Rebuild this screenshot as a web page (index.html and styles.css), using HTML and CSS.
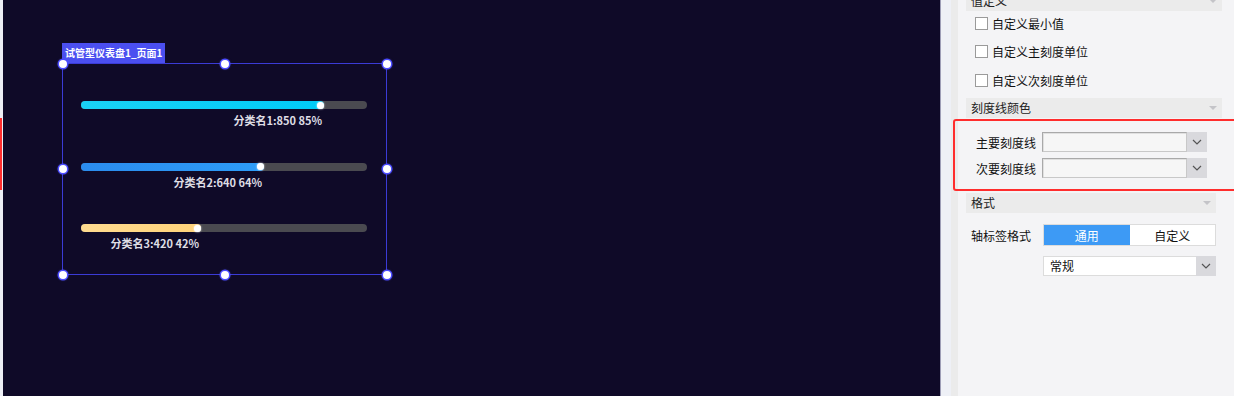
FILE: index.html
```html
<!DOCTYPE html>
<html lang="zh-CN">

<head>
    <meta charset="UTF-8">
    <meta name="viewport" content="width=device-width, initial-scale=1.0">
    <title>试管型仪表盘</title>
    <link rel="stylesheet" href="styles.css">
</head>

<body>
    <div class="edge"><span class="edge-mark"></span></div>

    <div class="canvas">
        <div class="widget">
            <div class="widget-tab">试管型仪表盘1_页面1</div>
            <div class="widget-frame">
                <div class="row">
                    <div class="track"><div class="fill fill-cyan" style="width: 85%"><span class="dot"></span></div></div>
                    <div class="bar-label" style="width: 85%">分类名1:850 85%</div>
                </div>
                <div class="row">
                    <div class="track"><div class="fill fill-blue" style="width: 64%"><span class="dot"></span></div></div>
                    <div class="bar-label" style="width: 64%">分类名2:640 64%</div>
                </div>
                <div class="row">
                    <div class="track"><div class="fill fill-yellow" style="width: 42%"><span class="dot"></span></div></div>
                    <div class="bar-label" style="width: 42%">分类名3:420 42%</div>
                </div>

                <!-- resize handles -->
                <span class="handle h-tl"></span>
                <span class="handle h-tc"></span>
                <span class="handle h-tr"></span>
                <span class="handle h-ml"></span>
                <span class="handle h-mr"></span>
                <span class="handle h-bl"></span>
                <span class="handle h-bc"></span>
                <span class="handle h-br"></span>
            </div>
        </div>
    </div>

    <div class="panel">
        <div class="panel-strip"></div>
        <div class="panel-gutter"></div>
        <div class="panel-body">
            <div class="section-head first">值定义<span class="caret"></span></div>
            <div class="checks">
                <label class="check"><span class="box"></span>自定义最小值</label>
                <label class="check"><span class="box"></span>自定义主刻度单位</label>
                <label class="check"><span class="box"></span>自定义次刻度单位</label>
            </div>

            <div class="section-head">刻度线颜色<span class="caret"></span></div>
            <div class="color-group">
                <div class="color-row">
                    <span class="color-label">主要刻度线</span>
                    <span class="color-input"></span>
                    <span class="drop-btn"><svg width="10" height="6" viewBox="0 0 10 6"><path d="M1 1l4 4 4-4" fill="none" stroke="#555" stroke-width="1.2"/></svg></span>
                </div>
                <div class="color-row last">
                    <span class="color-label">次要刻度线</span>
                    <span class="color-input"></span>
                    <span class="drop-btn"><svg width="10" height="6" viewBox="0 0 10 6"><path d="M1 1l4 4 4-4" fill="none" stroke="#555" stroke-width="1.2"/></svg></span>
                </div>
                <div class="highlight"></div>
            </div>

            <div class="section-head short">格式<span class="caret"></span></div>
            <div class="format-row">
                <span class="format-label">轴标签格式</span>
                <div class="segmented">
                    <span class="seg active">通用</span>
                    <span class="seg">自定义</span>
                </div>
            </div>
            <div class="format-row">
                <span class="format-label"></span>
                <div class="select">
                    <span class="select-text">常规</span>
                    <span class="drop-btn"><svg width="10" height="6" viewBox="0 0 10 6"><path d="M1 1l4 4 4-4" fill="none" stroke="#555" stroke-width="1.2"/></svg></span>
                </div>
            </div>
        </div>
    </div>
</body>

</html>
```

FILE: styles.css
```css
body {
    margin: 0;
    width: 1234px;
    height: 396px;
    display: flex;
    overflow: hidden;
    font-family: "Noto Sans CJK SC", "Noto Sans", sans-serif;
    background-color: #0f0a28;
}

/* left edge */
.edge {
    width: 3px;
    background-color: #eef0f6;
    position: relative;
}

.edge-mark {
    position: absolute;
    left: 0;
    top: 118px;
    width: 2px;
    height: 72px;
    background-color: #ff2d2d;
}

/* canvas */
.canvas {
    width: 937px;
    position: relative;
    background-color: #0f0a28;
}

.widget {
    position: absolute;
    left: 59px;
    top: 43px;
    display: flex;
    flex-direction: column;
    align-items: flex-start;
}

.widget-tab {
    height: 20px;
    line-height: 20px;
    padding: 0 3px;
    background-color: #4b4ff0;
    color: #fff;
    font-size: 10px;
    font-weight: bold;
    white-space: nowrap;
}

.widget-frame {
    position: relative;
    box-sizing: border-box;
    width: 325px;
    height: 212px;
    border: 1px solid #3b3bd6;
    padding: 37px 19px 0 18px;
}

.row {
    height: 61.5px;
}

.track {
    height: 8px;
    border-radius: 4px;
    background-color: #4a4a50;
}

.fill {
    position: relative;
    height: 8px;
    border-radius: 4px;
}

.fill-cyan {
    background: linear-gradient(90deg, #1ad2f5, #00cbf8);
}

.fill-blue {
    background: linear-gradient(90deg, #2b8cee, #2d9cf7);
}

.fill-yellow {
    background: linear-gradient(90deg, #ffdc90, #ffd27a);
}

.dot {
    position: absolute;
    right: 0;
    top: 50%;
    width: 7px;
    height: 7px;
    margin-top: -3.5px;
    border-radius: 50%;
    background-color: #fff;
    box-shadow: 0 0 2px #fff;
}

.bar-label {
    margin-top: 4px;
    line-height: 14px;
    box-sizing: border-box;
    padding-right: 2px;
    text-align: right;
    white-space: nowrap;
    font-size: 11px;
    font-weight: bold;
    color: #dedde4;
}

.handle {
    position: absolute;
    width: 8px;
    height: 8px;
    margin: -4px 0 0 -4px;
    border-radius: 50%;
    background-color: #fff;
    box-shadow: 0 0 0 1.5px #4a4aff, 0 0 3px #6a6aff;
}

.h-tl { left: -0.5px; top: -0.5px; }
.h-tc { left: 50%; top: -0.5px; }
.h-tr { left: calc(100% + 0.5px); top: -0.5px; }
.h-ml { left: -0.5px; top: 50%; }
.h-mr { left: calc(100% + 0.5px); top: 50%; }
.h-bl { left: -0.5px; top: calc(100% + 0.5px); }
.h-bc { left: 50%; top: calc(100% + 0.5px); }
.h-br { left: calc(100% + 0.5px); top: calc(100% + 0.5px); }

/* settings panel */
.panel {
    width: 294px;
    display: flex;
    background-color: #f4f4f6;
    border-left: 1px solid #9d9db6;
    box-sizing: border-box;
    font-size: 12px;
    color: #111;
}

.panel-strip {
    width: 10px;
    background-color: #eef0f6;
}

.panel-gutter {
    width: 7px;
    background-color: #ebebeb;
}

.panel-body {
    flex: 1;
    position: relative;
}

.section-head {
    position: relative;
    margin-left: 8px;
    width: 256px;
    height: 20px;
    line-height: 20px;
    padding-left: 5px;
    box-sizing: border-box;
    background-color: #ebebeb;
    color: #222;
}

.section-head.first {
    margin-top: -9px;
}

.section-head.short {
    width: 250px;
}

.caret {
    position: absolute;
    right: 5px;
    top: 8px;
    width: 0;
    height: 0;
    border-left: 4px solid transparent;
    border-right: 4px solid transparent;
    border-top: 4px solid #c4c4c8;
}

.checks {
    margin-top: -2px;
    padding-left: 17px;
    height: 89px;
}

.check {
    display: flex;
    align-items: center;
    height: 28.5px;
}

.box {
    width: 11px;
    height: 11px;
    border: 1px solid #9a9a9a;
    background-color: #fff;
    margin-right: 4px;
}

.color-group {
    position: relative;
    padding: 14px 0 15px 18px;
}

.color-row {
    display: flex;
    align-items: center;
    height: 20px;
    margin-bottom: 6px;
}

.color-row.last {
    margin-bottom: 0;
}

.color-label {
    width: 60px;
    margin-right: 6px;
    text-align: right;
    white-space: nowrap;
}

.color-input {
    box-sizing: border-box;
    width: 145px;
    height: 20px;
    background-color: #f6f6f6;
    border: 1px solid #c8c8c8;
    border-top-color: #a9a9a9;
    border-left-color: #a9a9a9;
    box-shadow: inset 1px 1px 0 #e0e0e0;
}

.drop-btn {
    width: 20px;
    height: 20px;
    display: flex;
    align-items: center;
    justify-content: center;
    background-color: #d9d9dd;
}

.highlight {
    position: absolute;
    left: -5px;
    top: 1px;
    width: 290px;
    height: 72px;
    box-sizing: border-box;
    border: 2px solid #ff2d2d;
    border-radius: 3px;
}

.format-row {
    display: flex;
    align-items: center;
    padding-left: 13px;
    margin-top: 11px;
}

.format-row + .format-row {
    margin-top: 10px;
}

.format-label {
    width: 72px;
    white-space: nowrap;
}

.segmented {
    display: flex;
    box-sizing: border-box;
    width: 173px;
    height: 22px;
    border: 1px solid #dcdcdc;
    background-color: #fff;
}

.seg {
    flex: 1;
    display: flex;
    align-items: center;
    justify-content: center;
    color: #111;
}

.seg.active {
    background-color: #3d9af5;
    color: #fff;
}

.select {
    display: flex;
    box-sizing: border-box;
    width: 173px;
    height: 20px;
    border: 1px solid #dcdcdc;
    border-right: none;
    background-color: #fff;
}

.select-text {
    flex: 1;
    line-height: 18px;
    padding-left: 6px;
}

.select .drop-btn {
    height: 20px;
    margin-top: -1px;
}
```
